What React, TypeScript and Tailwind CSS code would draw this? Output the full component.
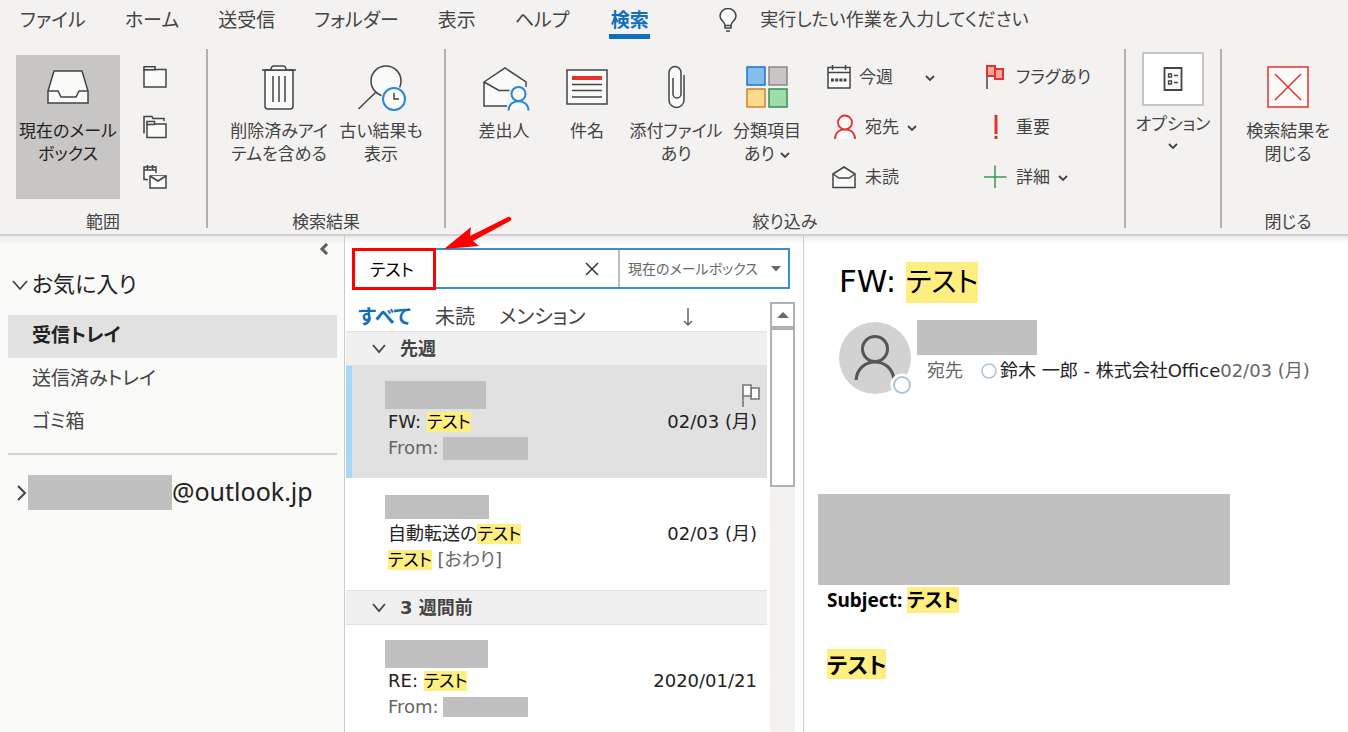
import { useState } from "react";
import type { ReactNode } from "react";
import clsx from "clsx";

const INK = "#444444";
const PAPER = "#fafaf9";

function Chevron({ className = "" }: { className?: string }) {
  return (
    <svg className={clsx("inline-block h-2 w-2.5", className)} viewBox="0 0 10 8" fill="none" stroke={INK} strokeWidth="1.8" aria-hidden="true">
      <path d="M1 2l4 4 4-4" />
    </svg>
  );
}

function Icon({ children, small = false }: { children: ReactNode; small?: boolean }) {
  return (
    <svg
      className={clsx("shrink-0 overflow-visible", small ? "size-6" : "size-12")}
      viewBox={small ? "0 0 24 24" : "0 0 48 48"}
      fill={PAPER}
      stroke={INK}
      strokeWidth="1.5"
      aria-hidden="true"
    >
      {children}
    </svg>
  );
}

function BigButton({ icon, children, className }: { icon: ReactNode; children: ReactNode; className?: string }) {
  return (
    <button type="button" className={clsx("mt-1.5 flex h-36 shrink-0 flex-col items-center gap-[9px] pt-2 text-[17px] leading-[23px] whitespace-nowrap", className)}>
      <Icon>{icon}</Icon>
      <span>{children}</span>
    </button>
  );
}

interface SmallButtonProps {
  icon: ReactNode;
  children?: ReactNode;
  className?: string;
  label?: string;
}

function SmallButton({ icon, children, className, label }: SmallButtonProps) {
  return (
    <button type="button" aria-label={label} className={clsx("flex h-[50px] items-center gap-2 text-[17px] whitespace-nowrap", className)}>
      <Icon small>{icon}</Icon>
      {children}
    </button>
  );
}

function Group({ label, children, className }: { label?: string; children: ReactNode; className?: string }) {
  return (
    <section className={clsx("flex h-[181px] flex-col justify-between", className)}>
      <div className="flex">{children}</div>
      {label && <h2 className="text-center text-[17px] leading-4">{label}</h2>}
    </section>
  );
}

function Divider() {
  return <div className="h-[179px] w-0.5 shrink-0 bg-[#b1b0af]" />;
}

function Mark({ children, className }: { children: ReactNode; className?: string }) {
  return <mark className={clsx("bg-[#ffee80] text-black", className)}>{children}</mark>;
}

function Redacted({ className }: { className: string }) {
  return <span className={clsx("block shrink-0 bg-[#c0c0c0]", className)} />;
}

const TABS = ["ファイル", "ホーム", "送受信", "フォルダー", "表示", "ヘルプ"];

function TabBar() {
  return (
    <nav className="flex h-[49px] items-start text-[19px] leading-10 whitespace-nowrap">
      <div className="flex gap-[39px] pl-5">
        {TABS.map((tab) => (
          <a key={tab} href="#">
            {tab}
          </a>
        ))}
      </div>
      <a href="#" className="ml-10 h-[39px] w-[41px] border-b-[5px] border-[#106ebe] text-center font-bold text-[#106ebe]">
        検索
      </a>
      <svg className="mt-2 ml-[68px] h-6 w-5" viewBox="0 0 20 24" fill={PAPER} stroke={INK} strokeWidth="1.5" aria-hidden="true">
        <path d="M7 17.500C7 13.500 2 13 2 8a8 7.500 0 0 1 16 0C18 13 13 13.500 13 17.500V20H7z" />
        <path d="M7 17.500h6M8 23h4" />
      </svg>
      <a href="#" className="ml-[22px] text-lg leading-10">
        実行したい作業を入力してください
      </a>
    </nav>
  );
}

function Ribbon() {
  return (
    <div className="flex h-[185px]">
      <Group label="範囲" className="w-[206px] shrink-0">
        <BigButton
          className="ml-4 w-[104px] bg-[#c8c6c4] text-[#222222]"
          icon={
            <>
              <path d="M4 28 10 8h28l6 20v12H4z" />
              <path d="M4 28h10l3 6h15l3-6h9" />
            </>
          }
        >
          現在のメール
          <br />
          ボックス
        </BigButton>
        <div className="mt-[3px] ml-[23px] flex flex-col">
          <SmallButton
            label="現在のフォルダー"
            icon={
              <>
                <path d="M1 4.500h22V22H1z" />
                <path d="M1 1.700h11v3H1z" />
              </>
            }
          />
          <SmallButton
            label="サブフォルダー"
            icon={
              <>
                <path d="M1 18.500V1.500h8l1 2h11V6" fill="none" />
                <path d="M4 9h19v13.500H4z" />
                <path d="M4 6.500h7.500v3H4z" />
              </>
            }
          />
          <SmallButton
            label="すべての Outlook アイテム"
            icon={
              <>
                <path d="M5 14.500H1V2h12v6" />
                <path d="M1 5h12M4.500 0v5M9.500 0v5" />
                <path d="M7 11h16v12H7z" />
                <path d="m7 11 8 5 8-5" />
              </>
            }
          />
        </div>
      </Group>
      <Divider />
      <Group label="検索結果" className="w-[236px] shrink-0">
        <BigButton
          className="ml-5 w-[102px]"
          icon={
            <>
              <path d="M10 7h28v36a3 3 0 0 1-3 3H13a3 3 0 0 1-3-3z" />
              <path d="M7 7h34M16 7c0-3 1-4 3-4h9c2 0 3 1 3 4M18 13v26M24 13v26M30 13v26" />
            </>
          }
        >
          削除済みアイ
          <br />
          テムを含める
        </BigButton>
        <BigButton
          className="w-[102px]"
          icon={
            <>
              <circle cx="29" cy="18" r="15" />
              <path d="M18.500 29.500 1.500 46" />
              <circle cx="37" cy="36" r="13" stroke="none" fill="#f3f2f1" />
              <circle cx="37" cy="36" r="11" stroke="#2b88d8" strokeWidth="2" />
              <path d="M37 30v6h5" fill="none" />
            </>
          }
        >
          古い結果も
          <br />
          表示
        </BigButton>
      </Group>
      <Divider />
      <Group label="絞り込み" className="min-w-[678px] flex-1">
        <BigButton
          className="ml-[17px] w-[82px]"
          icon={
            <>
              <path d="M4 19 25 5l21 14v24H4z" />
              <path d="m4 19 15 8.500h13" fill="none" />
              <path d="M27 48V36l2-8 4-5 8-1 8 3v23z" stroke="none" fill="#f3f2f1" />
              <path d="M28.500 47.500c0-12.500 20-12.500 20 0" stroke="#2b88d8" strokeWidth="2" />
              <circle cx="38.500" cy="31" r="7" stroke="#2b88d8" strokeWidth="2" />
            </>
          }
        >
          差出人
        </BigButton>
        <BigButton
          className="w-[84px]"
          icon={
            <>
              <path d="M4 7h40v34H4z" />
              <path d="M9 15h30" stroke="#e3332c" strokeWidth="4" />
              <path d="M9 21.500h30M9 27.500h30M9 34h30" />
            </>
          }
        >
          件名
        </BigButton>
        <BigButton
          className="w-[94px]"
          icon={<path d="M32 12v25a7.500 7.500 0 0 1-15 0V9.500a6 6 0 0 1 12 0V31a4 4 0 0 1-8 0V15" />}
        >
          添付ファイル
          <br />
          あり
        </BigButton>
        <BigButton
          className="w-[88px]"
          icon={
            <>
              <path d="M4 4h18v18H4z" fill="#83beec" stroke="#1e75c4" />
              <path d="M26 4h18v18H26z" fill="#c8c6c4" stroke="#8a8886" />
              <path d="M4 26h18v18H4z" fill="#fbd98f" stroke="#d08227" />
              <path d="M26 26h18v18H26z" fill="#a1ddaa" stroke="#2f9150" />
            </>
          }
        >
          分類項目
          <br />
          あり <Chevron />
        </BigButton>
        <div className="mt-1 ml-4 flex w-[149px] flex-col">
          <SmallButton
            icon={
              <>
                <path d="M1 1.500h22V22H1z" />
                <path d="M1 6.500h22M5.500-1v5M18.500-1v5" />
                <path d="M4 14h15.500" strokeWidth="3" strokeDasharray="3 1.200" />
              </>
            }
          >
            今週
            <Chevron className="ml-6" />
          </SmallButton>
          <SmallButton
            className="pl-1.5"
            icon={
              <>
                <path d="M2 23c0-13 20-13 20 0" stroke="#e3332c" strokeWidth="1.800" />
                <circle cx="12" cy="6.500" r="7" stroke="#e3332c" strokeWidth="1.800" />
              </>
            }
          >
            宛先
            <Chevron />
          </SmallButton>
          <SmallButton
            className="pl-1.5"
            icon={
              <>
                <path d="M0 8 11 1l11 7v13.500H0z" />
                <path d="m0 8 6 4h10l6-4" fill="none" />
              </>
            }
          >
            未読
          </SmallButton>
        </div>
        <div className="mt-1 ml-2 flex flex-col">
          <SmallButton
            icon={
              <>
                <path d="M3 23V0" />
                <path d="M11 3h8v10h-8z" fill="#f4a5a1" stroke="#e3332c" strokeWidth="2" />
                <path d="M3 0h8v10H3z" fill="#f4a5a1" stroke="#e3332c" strokeWidth="2" />
              </>
            }
          >
            フラグあり
          </SmallButton>
          <SmallButton icon={<path d="M12-1v19M12 20v3" stroke="#e3332c" strokeWidth="3" />}>重要</SmallButton>
          <SmallButton icon={<path d="M11-.500V22M0 11h22.500" stroke="#3a9a56" strokeWidth="1.500" />}>
            詳細
            <Chevron />
          </SmallButton>
        </div>
      </Group>
      <Divider />
      <Group className="w-[94px] shrink-0">
        <button type="button" className="mt-[3px] flex w-full flex-col items-center text-[17px] leading-9">
          <span className="flex h-[54px] w-[62px] items-center justify-center border-2 border-[#c8c6c4] bg-white">
            <Icon small>
              <path d="M3.500 1h17v22h-17z" strokeWidth="1.800" />
              <path d="M7.500 7h3v3h-3zM7.500 14h3v3h-3zM13 8.500h4M13 15.500h4" strokeWidth="1.300" />
            </Icon>
          </span>
          オプション
          <Chevron />
        </button>
      </Group>
      <Divider />
      <Group label="閉じる" className="w-[126px] shrink-0 pl-1.5">
        <BigButton
          className="w-full"
          icon={
            <>
              <path d="M4 4h40v40H4z" stroke="#e3332c" />
              <path d="m11 11 26 26M37 11 11 37" stroke="#e3332c" />
            </>
          }
        >
          検索結果を
          <br />
          閉じる
        </BigButton>
      </Group>
    </div>
  );
}

function FolderPane() {
  return (
    <aside className="flex flex-col border-r border-[#cccccc] bg-[#fafaf9] bg-linear-to-b from-[#ebebeb] to-[#fafaf9] bg-size-[100%_8px] bg-no-repeat pr-[7px] pl-2 text-[19px] whitespace-nowrap">
      <button type="button" aria-label="フォルダー ウィンドウを最小化" className="mt-[7px] mr-2 h-3 self-end">
        <svg className="h-3 w-2.5" viewBox="0 0 10 12" fill="none" stroke="#605e5c" strokeWidth="3" aria-hidden="true">
          <path d="M8 1 3 6l5 5" />
        </svg>
      </button>
      <button type="button" className="mt-2 flex h-[43px] items-center gap-1 pl-1 text-[22px] text-[#222222]">
        <svg className="h-3 w-4 shrink-0" viewBox="0 0 16 12" fill="none" stroke={INK} strokeWidth="1.8" aria-hidden="true">
          <path d="m1 2 7 8 7-8" />
        </svg>
        お気に入り
      </button>
      <ul className="mt-[9px]">
        <li>
          <a href="#" className="flex h-[43px] items-center bg-[#e1e1e1] pb-0.5 pl-6 font-bold text-[#222222]">
            受信トレイ
          </a>
        </li>
        <li>
          <a href="#" className="flex h-[43px] items-center pb-0.5 pl-6">
            送信済みトレイ
          </a>
        </li>
        <li>
          <a href="#" className="flex h-[43px] items-center pb-0.5 pl-6">
            ゴミ箱
          </a>
        </li>
      </ul>
      <hr className="mt-[9px] border-t-2 border-[#d2d0ce]" />
      <button type="button" className="mt-5 flex h-[35px] items-center pl-2 font-['Noto_Sans',sans-serif] text-[25px] text-[#222222]">
        <svg className="h-4 w-3 shrink-0" viewBox="0 0 12 16" fill="none" stroke={INK} strokeWidth="2" aria-hidden="true">
          <path d="m2 1 7 7-7 7" />
        </svg>
        <Redacted className="h-[35px] w-36" />
        <span className="pb-0.5">@outlook.jp</span>
      </button>
    </aside>
  );
}

function GroupHeader({ children }: { children: ReactNode }) {
  return (
    <h3 className="border-y border-[#e1e1e1] bg-[#f0f0f0] text-lg font-bold">
      <button type="button" className="flex h-[33px] w-full items-center gap-3.5 pl-[26px]">
        <svg className="h-2.5 w-3.5" viewBox="0 0 14 10" fill="none" stroke={INK} strokeWidth="1.8" aria-hidden="true">
          <path d="m1 1 6 7 6-7" />
        </svg>
        {children}
      </button>
    </h3>
  );
}

interface MessageProps {
  nameBox: string;
  subject: ReactNode;
  date: string;
  preview: ReactNode;
  selected?: boolean;
}

function Message({ nameBox, subject, date, preview, selected = false }: MessageProps) {
  return (
    <li
      className={clsx(
        "h-28 border-l-6 pt-[15px] pr-2.5 pl-9 text-lg leading-[26px]",
        selected ? "border-[#a9d8f5] bg-[#e1e1e1]" : "border-transparent",
      )}
    >
      <div className="-ml-[3px] flex h-7 items-start justify-between">
        <Redacted className={nameBox} />
        {selected && (
          <svg className="mt-0.5 -mr-1 h-6 w-5" viewBox="0 0 20 24" fill={PAPER} stroke="#777777" strokeWidth="1.6" role="img" aria-label="フラグ">
            <path d="M10 5h8v11h-8z" />
            <path d="M2 24V2h8v11H2" />
          </svg>
        )}
      </div>
      <div className="flex justify-between text-[#222222]">
        <span>{subject}</span>
        <time>{date}</time>
      </div>
      <div className="flex items-center text-[#666666]">{preview}</div>
    </li>
  );
}

function MessageList() {
  const [query, setQuery] = useState("テスト");
  return (
    <main className="flex flex-col border-r border-[#cccccc] pl-px whitespace-nowrap">
      <form className="relative mt-3 mr-[13px] ml-1.5 flex h-[41px] border-2 border-[#3a8fd0]">
        <input
          aria-label="検索"
          value={query}
          onChange={(event) => setQuery(event.target.value)}
          className="min-w-0 flex-1 pt-1 pl-4 text-[17px] text-black outline-none"
        />
        <button type="button" aria-label="検索を閉じる" onClick={() => setQuery("")} className="w-[52px] px-[18px]">
          <svg className="size-4" viewBox="0 0 16 16" fill="none" stroke="#333333" strokeWidth="1.5" aria-hidden="true">
            <path d="M2 2 14 14M14 2 2 14" />
          </svg>
        </button>
        <div className="relative flex w-[170px] border-l-2 border-[#c0c0c0]">
          <select aria-label="検索範囲" className="w-full appearance-none pl-2 text-sm text-[#666666] outline-none">
            <option>現在のメールボックス</option>
          </select>
          <svg className="pointer-events-none absolute top-4 right-1.5 h-1.5 w-3" viewBox="0 0 12 6" fill="#666666" aria-hidden="true">
            <path d="M1 0h10L6 5.500z" />
          </svg>
        </div>
        <div className="pointer-events-none absolute -top-0.5 -left-0.5 h-[42px] w-[84px] border-3 border-[#ff0000]" />
        <svg className="pointer-events-none absolute bottom-[37px] left-[89px] h-[34px] w-[72px]" viewBox="0 0 72 34" fill="#ff0000" aria-hidden="true">
          <path d="m1 33 27-22-1 9L65 1c3-1 4.500 2.500 2 4L30 25l6 5z" />
        </svg>
      </form>
      <div className="flex flex-1">
        <div className="min-w-0 flex-1">
          <div className="flex h-[42px] items-center gap-6 pt-3.5 pl-3 text-xl leading-7">
            <button type="button" className="font-bold text-[#106ebe]">
              すべて
            </button>
            <button type="button">未読</button>
            <button type="button">メンション</button>
            <button type="button" aria-label="並べ替え" className="mr-[72px] ml-auto">
              <svg className="h-5 w-3.5" viewBox="0 0 14 20" fill="none" stroke="#666666" strokeWidth="1.5" aria-hidden="true">
                <path d="M7 1v17M3 14l4 4 4-4" />
              </svg>
            </button>
          </div>
          <GroupHeader>先週</GroupHeader>
          <ul>
            <Message
              selected
              nameBox="h-7 w-[101px]"
              subject={
                <>
                  FW: <Mark className="text-[17px]">テスト</Mark>
                </>
              }
              date="02/03 (月)"
              preview={
                <>
                  From: <Redacted className="ml-1 h-[23px] w-[85px]" />
                </>
              }
            />
            <Message
              nameBox="mt-0.5 h-6 w-[104px]"
              subject={
                <>
                  自動転送の<Mark className="text-[17px]">テスト</Mark>
                </>
              }
              date="02/03 (月)"
              preview={
                <span>
                  <Mark className="text-[17px]">テスト</Mark> [おわり]
                </span>
              }
            />
          </ul>
          <GroupHeader>3 週間前</GroupHeader>
          <ul>
            <Message
              nameBox="h-7 w-[103px]"
              subject={
                <>
                  RE: <Mark className="text-[17px]">テスト</Mark>
                </>
              }
              date="2020/01/21"
              preview={
                <>
                  From: <Redacted className="ml-1 h-5 w-[85px]" />
                </>
              }
            />
          </ul>
        </div>
        <div className="mt-[13px] mr-2 ml-[3px] flex w-[25px] flex-col bg-[#f3f2f1]">
          <div className="flex h-[26px] items-center justify-center border-2 border-[#b1b0af] bg-white">
            <svg className="h-1.5 w-3" viewBox="0 0 12 6" fill="#666666" aria-hidden="true">
              <path d="M0 6h12L6 0z" />
            </svg>
          </div>
          <div className="h-[159px] border-2 border-[#b1b0af] bg-white" />
        </div>
      </div>
    </main>
  );
}

function ReadingPane() {
  return (
    <article className="min-w-0 pl-3.5 whitespace-nowrap text-black">
      <h1 className="mt-6 h-[42px] pl-[21px] text-[31px] leading-[42px]">
        FW: <Mark className="py-1 text-[28px]">テスト</Mark>
      </h1>
      <div className="mt-5 flex pl-[21px]">
        <svg className="h-[73px] w-[72px] shrink-0 overflow-visible" viewBox="0 0 72 73" fill="none" aria-hidden="true">
          <circle cx="36" cy="36" r="36" fill="#d2d2d2" />
          <path d="M17 58c2-24 36-24 38 0" stroke="#555555" strokeWidth="3" />
          <circle cx="36" cy="27" r="12.500" stroke="#555555" strokeWidth="3" />
          <circle cx="63" cy="63" r="11.500" fill="#ffffff" />
          <circle cx="63" cy="63" r="8" stroke="#a9c5da" strokeWidth="2" />
        </svg>
        <div className="ml-1.5">
          <Redacted className="-mt-0.5 h-[35px] w-[120px]" />
          <div className="mt-0.5 flex items-center pl-2.5 text-lg leading-7 text-[#666666]">
            <span>宛先</span>
            <svg className="ml-[18px] size-4" viewBox="0 0 16 16" fill="none" stroke="#a9c5da" strokeWidth="1.5" aria-hidden="true">
              <circle cx="8" cy="8" r="7" />
            </svg>
            <span className="ml-[3px] text-[#222222]">鈴木 一郎 - 株式会社Office</span>
            <time>02/03 (月)</time>
          </div>
        </div>
      </div>
      <Redacted className="mt-[99px] h-[91px] w-[412px]" />
      <div className="pl-[9px] font-['Noto_Sans','Noto_Sans_CJK_JP',sans-serif] font-bold">
        <p className="text-[19px] leading-[31px]">
          Subject: <Mark>テスト</Mark>
        </p>
        <p className="mt-8 text-[22px] leading-8">
          <Mark>テスト</Mark>
        </p>
      </div>
    </article>
  );
}

export default function App() {
  return (
    <div className="flex min-h-screen flex-col overflow-x-hidden bg-white font-['DejaVu_Sans','Noto_Sans_CJK_JP',sans-serif] text-[#444444] [font-feature-settings:'palt']">
      <header className="border-b-2 border-[#d0d0d0] bg-[#f3f2f1]">
        <TabBar />
        <Ribbon />
      </header>
      <div className="grid flex-1 grid-cols-[345px_459px_1fr] bg-linear-to-b from-[#ebebeb] to-white bg-size-[100%_8px] bg-no-repeat">
        <FolderPane />
        <MessageList />
        <ReadingPane />
      </div>
    </div>
  );
}
